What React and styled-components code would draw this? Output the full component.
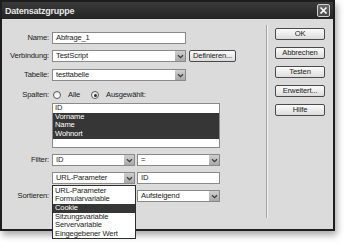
import React from 'react';
import styled, { createGlobalStyle } from 'styled-components';

const Global = createGlobalStyle`
  html, body { margin: 0; padding: 0; background: #fff; }
  body { font-family: "Liberation Sans", Arial, sans-serif; }
  * { box-sizing: border-box; }
`;

const Page = styled.div`
  width: 346px;
  height: 250px;
  overflow: hidden;
  background: #fff;
`;

const Window = styled.div`
  width: 335px;
  height: 231px;
  border: 2px solid #1e1e1e;
  background: #dbdbdb;
  box-shadow: 2px 4px 7px rgba(0, 0, 0, 0.35);
  display: flex;
  flex-direction: column;
`;

const TitleBar = styled.div`
  height: 17px;
  flex: none;
  background: linear-gradient(#3a3a3a, #242424);
  display: flex;
  align-items: center;
  justify-content: space-between;
  padding: 0 3px 0 3px;
`;

const Title = styled.span`
  color: #e6e6e6;
  font-weight: bold;
  font-size: 9px;
  letter-spacing: -0.25px;
`;

const Close = styled.div`
  width: 13px;
  height: 13px;
  border: 1px solid #cfcfcf;
  border-radius: 2px;
  background: linear-gradient(#6a6a6a, #4a4a4a);
  display: flex;
  align-items: center;
  justify-content: center;
`;

const Body = styled.div`
  flex: 1;
  display: flex;
  font-size: 7.6px;
  color: #1a1a1a;
  letter-spacing: -0.15px;
`;

const Form = styled.div`
  width: 264px;
  flex: none;
  display: flex;
  flex-direction: column;
`;

const Separator = styled.div`
  width: 1px;
  height: 193px;
  margin-top: 6px;
  background: #a4a4a4;
  box-shadow: 1px 0 0 #f2f2f2;
  flex: none;
`;

const Buttons = styled.div`
  display: flex;
  flex-direction: column;
  gap: 7px;
  padding: 9px 0 0 8px;
`;

const Button = styled.div`
  width: ${(p) => p.$w || 50}px;
  height: 12px;
  flex: none;
  margin-left: ${(p) => p.$ml || 0}px;
  border: 1px solid #4a4a4a;
  border-radius: 2px;
  background: linear-gradient(#fbfbfb, #dcdcdc);
  display: flex;
  align-items: center;
  justify-content: center;
  line-height: 10px;
  color: #222;
`;

const Row = styled.div`
  display: flex;
  align-items: center;
  margin-top: ${(p) => p.$mt}px;
  gap: 2px;
`;

const Label = styled.div`
  width: 47px;
  flex: none;
  margin-right: 1px;
  text-align: right;
  line-height: 12px;
`;

const Field = styled.div`
  position: relative;
  width: ${(p) => p.$w}px;
  height: 12px;
  flex: none;
  border: 1px solid #8a8a8a;
  background: #fff;
  padding-left: 3px;
  line-height: 10px;
  white-space: nowrap;
`;

const Arrow = styled.div`
  position: absolute;
  right: 0;
  top: 0;
  width: 10px;
  height: 10px;
  background: linear-gradient(#cfcfcf, #a9a9a9);
  display: flex;
  align-items: center;
  justify-content: center;
`;

const Radio = styled.span`
  width: 8px;
  height: 8px;
  border-radius: 50%;
  border: 1px solid #5a5a5a;
  background: linear-gradient(#e8e8e8, #ffffff);
  display: inline-flex;
  align-items: center;
  justify-content: center;
  flex: none;
  margin: 0 ${(p) => p.$gap}px 0 ${(p) => p.$ml}px;
  &::after {
    content: '';
    width: 3px;
    height: 3px;
    border-radius: 50%;
    background: ${(p) => (p.$on ? '#2a2a2a' : 'transparent')};
  }
`;

const RadioText = styled.span`
  line-height: 12px;
`;

const ListBox = styled.div`
  margin-left: 50px;
  width: 168px;
  height: 45px;
  border: 1px solid #8a8a8a;
  background: #fff;
`;

const Item = styled.div`
  height: 8.7px;
  line-height: 8.7px;
  padding-left: 2px;
  background: ${(p) => (p.$sel ? '#363636' : 'transparent')};
  color: ${(p) => (p.$sel ? '#fff' : '#1a1a1a')};
  white-space: nowrap;
`;

const Popup = styled.div`
  position: absolute;
  left: -1px;
  top: 12px;
  width: 84px;
  height: 54px;
  border: 1px solid #2e2e2e;
  background: #fff;
  z-index: 5;
  padding-top: 0.5px;
`;

const Chevron = () => (
  <svg width="7" height="5" viewBox="0 0 7 5">
    <path d="M1 1.2 L3.5 3.6 L6 1.2" fill="none" stroke="#3c3c3c" strokeWidth="1.3" />
  </svg>
);

const Select = ({ w, children, popup }) => (
  <Field $w={w}>
    {children}
    <Arrow>
      <Chevron />
    </Arrow>
    {popup}
  </Field>
);

const popupItems = [
  'URL-Parameter',
  'Formularvariable',
  'Cookie',
  'Sitzungsvariable',
  'Servervariable',
  'Eingegebener Wert',
];

export default function App() {
  return (
    <Page>
      <Global />
      <Window>
        <TitleBar>
          <Title>Datensatzgruppe</Title>
          <Close>
            <svg width="9" height="9" viewBox="0 0 9 9">
              <path d="M1.5 1.5 L7.5 7.5 M7.5 1.5 L1.5 7.5" stroke="#fff" strokeWidth="1.6" />
            </svg>
          </Close>
        </TitleBar>
        <Body>
          <Form>
            <Row $mt={13}>
              <Label>Name:</Label>
              <Field $w={134}>Abfrage_1</Field>
            </Row>
            <Row $mt={6}>
              <Label>Verbindung:</Label>
              <Select w={134}>TestScript</Select>
              <Button $w={47} $ml={1}>Definieren...</Button>
            </Row>
            <Row $mt={7}>
              <Label>Tabelle:</Label>
              <Select w={134}>testtabelle</Select>
            </Row>
            <Row $mt={8}>
              <Label>Spalten:</Label>
              <Radio $ml={1} $gap={5} />
              <RadioText>Alle</RadioText>
              <Radio $ml={9} $gap={5} $on />
              <RadioText>Ausgewählt:</RadioText>
            </Row>
            <Row $mt={2}>
              <ListBox>
                <Item>ID</Item>
                <Item $sel>Vorname</Item>
                <Item $sel>Name</Item>
                <Item $sel>Wohnort</Item>
              </ListBox>
            </Row>
            <Row $mt={6}>
              <Label>Filter:</Label>
              <Select w={83}>ID</Select>
              <Select w={83}>=</Select>
            </Row>
            <Row $mt={6}>
              <Label />
              <Select
                w={83}
                popup={
                  <Popup>
                    {popupItems.map((t) => (
                      <Item key={t} $sel={t === 'Cookie'}>
                        {t}
                      </Item>
                    ))}
                  </Popup>
                }
              >
                URL-Parameter
              </Select>
              <Field $w={83}>ID</Field>
            </Row>
            <Row $mt={6}>
              <Label>Sortieren:</Label>
              <Select w={83} />
              <Select w={83}>Aufsteigend</Select>
            </Row>
          </Form>
          <Separator />
          <Buttons>
            <Button>OK</Button>
            <Button>Abbrechen</Button>
            <Button>Testen</Button>
            <Button>Erweitert...</Button>
            <Button>Hilfe</Button>
          </Buttons>
        </Body>
      </Window>
    </Page>
  );
}
